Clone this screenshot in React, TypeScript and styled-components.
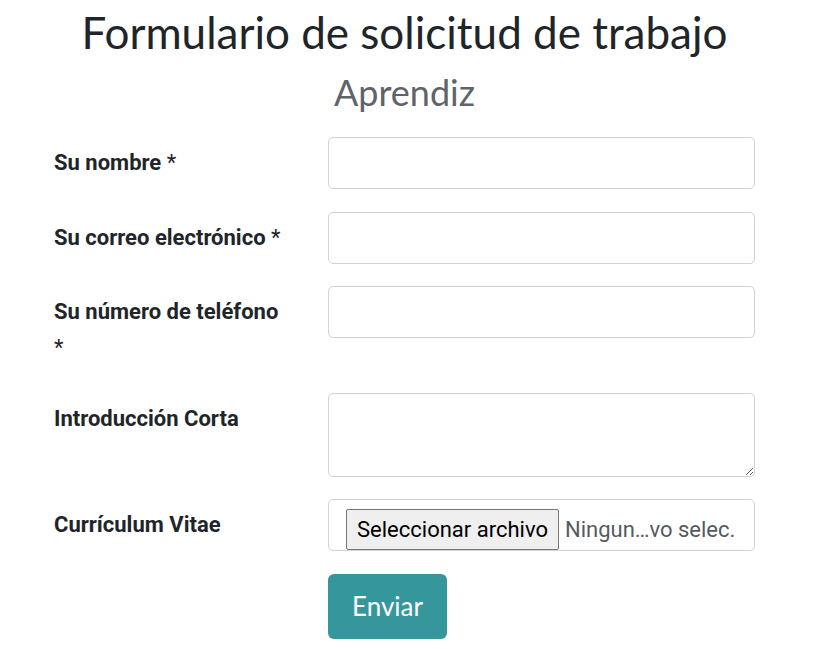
import styled, { createGlobalStyle } from "styled-components";

const GlobalStyle = createGlobalStyle`
  body {
    margin: 0;
    background: #ffffff;
    color: #212529;
    font-family: Roboto, "Liberation Sans", sans-serif;
  }
`;

interface fieldType {
  label: string;
  required?: boolean;
  kind?: "input" | "textarea" | "file";
}

const fields: fieldType[] = [
  { label: "Su nombre", required: true },
  { label: "Su correo electrónico", required: true },
  { label: "Su número de teléfono", required: true },
  { label: "Introducción Corta", kind: "textarea" },
  { label: "Currículum Vitae", kind: "file" },
];

const Field = ({ label, required, kind = "input" }: fieldType) => (
  <S.Row>
    <S.Label>
      {label}
      {required && <S.Star> *</S.Star>}
    </S.Label>
    {kind === "textarea" && <S.Textarea />}
    {kind === "input" && <S.Input type="text" />}
    {kind === "file" && (
      <S.FileBox>
        <S.FileButton type="button">Seleccionar archivo</S.FileButton>
        <S.FileName>Ningun…vo selec.</S.FileName>
      </S.FileBox>
    )}
  </S.Row>
);

const App = () => {
  return (
    <>
      <GlobalStyle />
      <S.Page>
        <S.Title>Formulario de solicitud de trabajo</S.Title>
        <S.Subtitle>Aprendiz</S.Subtitle>
        <S.Form onSubmit={(e: React.FormEvent) => e.preventDefault()}>
          {fields.map((f) => (
            <Field key={f.label} {...f} />
          ))}
          <S.Row>
            <span />
            <div>
              <S.Submit type="submit">Enviar</S.Submit>
            </div>
          </S.Row>
        </S.Form>
      </S.Page>
    </>
  );
};

export default App;

const S: any = {};

S.Page = styled.div`
  width: 701px;
  margin-left: 54px;
  padding-top: 4px;
`;

S.Title = styled.h1`
  margin: 0;
  text-align: center;
  font-family: Lato, "Open Sans", sans-serif;
  font-weight: 400;
  font-size: 44px;
  line-height: 56px;
  color: #212529;
`;

S.Subtitle = styled.h2`
  margin: 10px 0 0;
  text-align: center;
  font-family: Lato, "Open Sans", sans-serif;
  font-weight: 400;
  font-size: 36px;
  line-height: 44px;
  color: #5f646a;
`;

S.Form = styled.form`
  margin-top: 23px;
`;

S.Row = styled.div`
  display: grid;
  grid-template-columns: 274px 427px;
  align-items: start;
  margin-bottom: 22.6px;
`;

S.Label = styled.label`
  display: block;
  width: 232px;
  padding: 8px 0 4px;
  font-size: 22px;
  line-height: 36px;
  font-weight: 700;
  color: #212529;
`;

S.Star = styled.span`
  font-weight: 400;
`;

S.Input = styled.input`
  box-sizing: border-box;
  display: block;
  width: 427px;
  height: 52px;
  border: 1px solid #ced4da;
  border-radius: 5px;
  background: #fff;
  font: inherit;
  outline: none;
`;

S.Textarea = styled.textarea`
  box-sizing: border-box;
  display: block;
  width: 427px;
  height: 84px;
  border: 1px solid #ced4da;
  border-radius: 5px;
  background: #fff;
  font: inherit;
  outline: none;
  resize: vertical;
`;

S.FileBox = styled.div`
  box-sizing: border-box;
  display: flex;
  align-items: flex-start;
  width: 427px;
  height: 52px;
  padding: 9px 0 0 17px;
  border: 1px solid #ced4da;
  border-radius: 5px;
  background: #fff;
  overflow: visible;
`;

S.FileButton = styled.button`
  box-sizing: border-box;
  height: 41px;
  padding: 0 10px;
  background: #efefef;
  border: 1px solid #767676;
  border-radius: 2px;
  font-family: Roboto, "Liberation Sans", sans-serif;
  font-size: 22px;
  color: #000;
  white-space: nowrap;
`;

S.FileName = styled.span`
  margin-left: 6px;
  line-height: 41px;
  font-size: 22px;
  color: #555a60;
  white-space: nowrap;
`;

S.Submit = styled.button`
  width: 119px;
  height: 65px;
  border: none;
  border-radius: 6px;
  background: #35969b;
  color: #fff;
  font-family: Lato, "Open Sans", sans-serif;
  font-size: 26px;
  cursor: pointer;
`;
